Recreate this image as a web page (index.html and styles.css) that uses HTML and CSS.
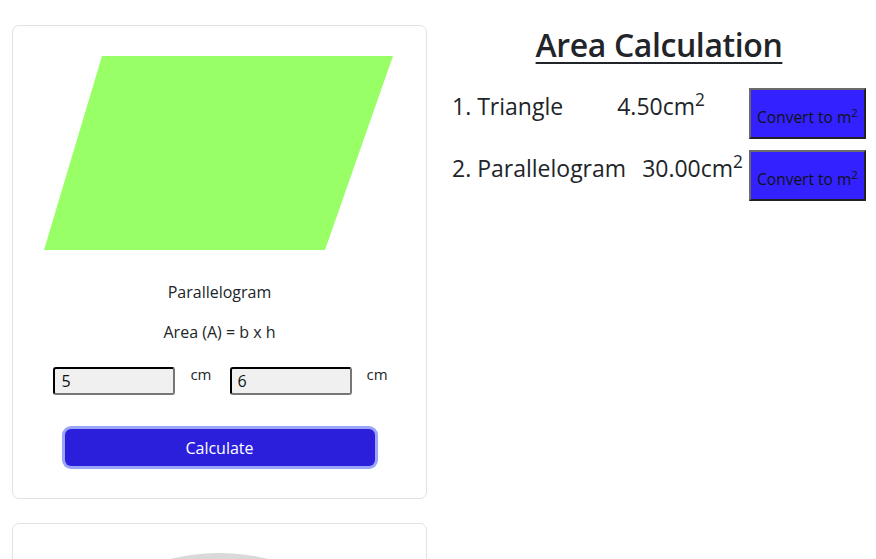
FILE: index.html
```html
<!DOCTYPE html>
<html>
<head>
<meta charset="utf-8">
<link rel="stylesheet" href="styles.css">
</head>
<body>
<div class="page">
  <div class="left">
    <div class="card">
      <svg class="shape" width="349" height="194" viewBox="0 0 349 194">
        <polygon points="58,0 349,0 281,194 0,194" fill="#99ff66"/>
      </svg>
      <p class="name">Parallelogram</p>
      <p class="formula">Area (A) = b x h</p>
      <div class="inputs">
        <input class="field" type="text" value="5"><span class="unit">cm</span>
        <input class="field" type="text" value="6"><span class="unit">cm</span>
      </div>
      <button class="calc">Calculate</button>
    </div>
    <div class="card card2">
      <div class="blob"></div>
    </div>
  </div>
  <div class="right">
    <h1 class="title">Area Calculation</h1>
    <div class="row">
      <span class="label">1. Triangle</span>
      <span class="value">4.50cm<sup>2</sup></span>
      <button class="convert">Convert to m<sup>2</sup></button>
    </div>
    <div class="row">
      <span class="label">2. Parallelogram</span>
      <span class="value">30.00cm<sup>2</sup></span>
      <button class="convert">Convert to m<sup>2</sup></button>
    </div>
  </div>
</div>
</body>
</html>
```
FILE: styles.css
```css
html, body {
  margin: 0;
  padding: 0;
  background: #fff;
  color: #212529;
  font-family: "Open Sans", "Noto Sans", sans-serif;
  overflow: hidden;
}
.page {
  display: flex;
  padding: 25px 10px 0 12px;
  gap: 25px;
}
.left {
  width: 415px;
  flex: none;
  display: flex;
  flex-direction: column;
  gap: 24px;
}
.card {
  border: 1px solid #e2e2e2;
  border-radius: 7px;
  text-align: center;
  padding: 30px 0 32px;
}
.shape {
  display: block;
  margin-left: 31px;
}
.name, .formula {
  margin: 0;
  font-size: 16px;
  line-height: 24px;
}
.name { margin-top: 30px; }
.formula { margin-top: 16px; }
.inputs {
  display: flex;
  justify-content: center;
  align-items: flex-start;
  margin-top: 23px;
  margin-left: 2px;
}
.field {
  width: 122px;
  height: 28px;
  box-sizing: border-box;
  border: 2px inset #767676;
  border-top-color: #2a2a2a;
  border-left-color: #2a2a2a;
  border-right-color: #767676;
  border-bottom-color: #767676;
  border-radius: 3px;
  background: #f0f0f0;
  font-family: inherit;
  font-size: 16px;
  padding: 0 6px;
  color: #111;
}
.unit {
  font-size: 15px;
  line-height: 14px;
  margin: 0 18px 0 15px;
}
.unit:last-child { margin-right: 0; }
.calc {
  display: block;
  margin: 34px auto 0;
  width: 310px;
  height: 37px;
  border: none;
  border-radius: 6px;
  background: #2b1fdc;
  color: #fff;
  font-family: inherit;
  font-size: 16px;
  box-shadow: 0 0 0 3px #9aa5f7;
}
.card2 {
  height: 60px;
  padding: 0;
  position: relative;
  overflow: hidden;
}
.blob {
  position: absolute;
  left: 61px;
  top: 29px;
  width: 290px;
  height: 200px;
  border-radius: 50%;
  background: #d9d9d9;
}
.right {
  width: 414px;
  flex: none;
}
.title {
  margin: 0;
  text-align: center;
  font-size: 32px;
  font-weight: 600;
  letter-spacing: -0.4px;
  line-height: 40px;
  text-decoration: underline;
  text-underline-offset: 5px;
  text-decoration-thickness: 2px;
}
.row {
  display: flex;
  justify-content: space-between;
  align-items: flex-start;
  margin-top: 0;
}
.row:first-of-type { margin-top: 23px; }
.row + .row { margin-top: 11px; }
.label, .value {
  font-size: 23px;
  line-height: 36px;
}
.value { margin-left: 10px; }
.value sup, .convert sup {
  font-size: 0.75em;
  line-height: 0;
  vertical-align: 0;
  position: relative;
  top: -0.5em;
}
.convert {
  width: 117px;
  height: 51px;
  background: #3322ff;
  color: #111;
  font-family: inherit;
  font-size: 15.5px;
  border: 2px solid;
  border-color: #6b6b6b #222 #222 #6b6b6b;
  padding: 6px 0 0;
}
```
